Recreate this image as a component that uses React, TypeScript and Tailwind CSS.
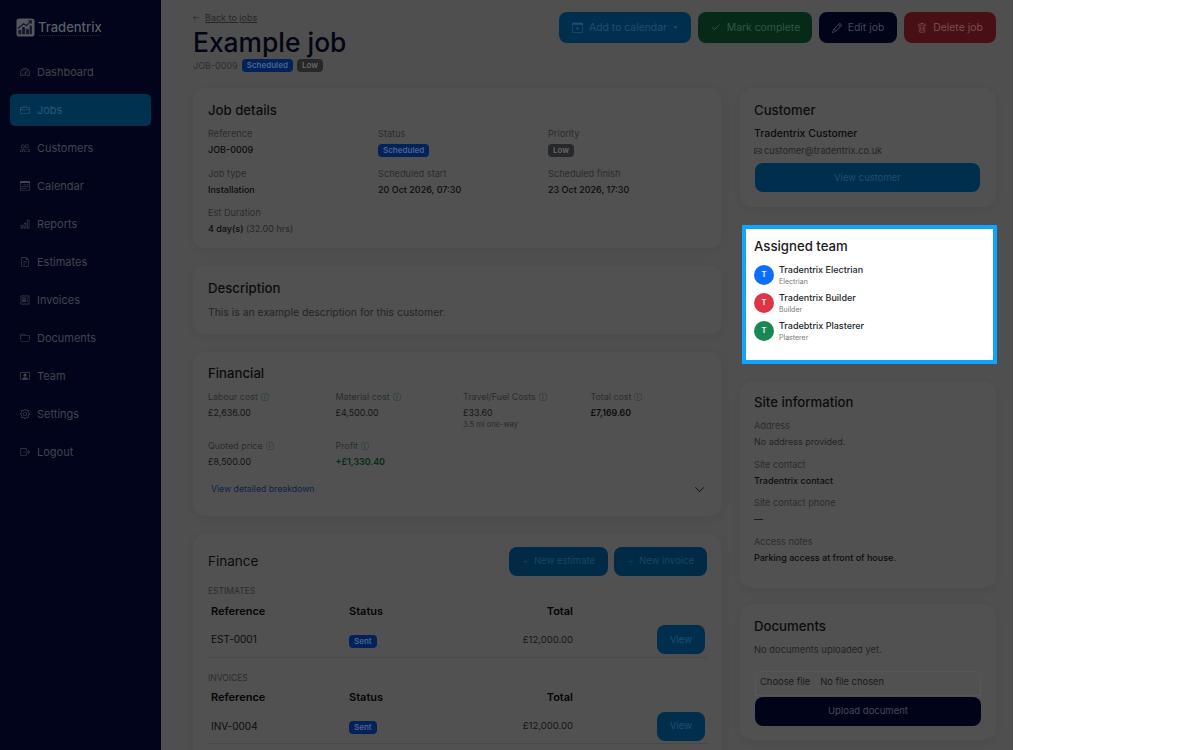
import React from "react";
import {
  BsSpeedometer2, BsBriefcase, BsPeople, BsCalendar3, BsBarChart, BsFileEarmarkText, BsReceipt, BsFolder,
  BsPersonVideo, BsGear, BsBoxArrowRight, BsCalendarPlus, BsCheck2, BsPencil, BsTrash, BsPlusLg, BsEnvelope,
  BsInfoCircle, BsChevronDown, BsArrowLeft, BsCaretDownFill,
} from "react-icons/bs";

const navItems = [
  { label: "Dashboard", icon: BsSpeedometer2 },
  { label: "Jobs", icon: BsBriefcase, active: true },
  { label: "Customers", icon: BsPeople },
  { label: "Calendar", icon: BsCalendar3 },
  { label: "Reports", icon: BsBarChart },
  { label: "Estimates", icon: BsFileEarmarkText },
  { label: "Invoices", icon: BsReceipt },
  { label: "Documents", icon: BsFolder },
  { label: "Team", icon: BsPersonVideo },
  { label: "Settings", icon: BsGear },
  { label: "Logout", icon: BsBoxArrowRight },
];

const team = [
  { name: "Tradentrix Electrian", role: "Electrian", color: "bg-[#0d6efd]" },
  { name: "Tradentrix Builder", role: "Builder", color: "bg-[#dc3545]" },
  { name: "Tradebtrix Plasterer", role: "Plasterer", color: "bg-[#198754]" },
];

const Card = ({ className = "", children }: { className?: string; children: React.ReactNode }) => (
  <section className={`rounded-xl bg-[#515151] shadow-[0_2px_10px_rgba(0,0,0,0.05)] ${className}`}>{children}</section>
);

const Title = ({ children }: { children: React.ReactNode }) => (
  <h3 className="text-[13.2px] leading-[22px] font-medium text-[#0c0c0e]">{children}</h3>
);

const Field = ({ label, value, className = "" }: { label: string; value: React.ReactNode; className?: string }) => (
  <div className={className}>
    <div className="text-[9.2px] leading-[14px] text-[#2c2c2e]">{label}</div>
    <div className="mt-[1px] text-[9px] leading-[16px] font-medium text-[#0c0c0e]">{value}</div>
  </div>
);

const Badge = ({ children, gray }: { children: React.ReactNode; gray?: boolean }) => (
  <span className={`inline-block rounded-[4px] px-[5px] text-[8px] leading-[13px] font-semibold ${gray ? "bg-[#26282a] text-[#6a6a6a]" : "bg-[#03225a] text-[#4a6494]"}`}>
    {children}
  </span>
);

const Money = ({ label, value, sub, bold, green }: { label: string; value: string; sub?: string; bold?: boolean; green?: boolean }) => {
  const tone = green ? "font-semibold text-[#042c18]" : bold ? "font-semibold text-[#0c0c0e]" : "text-[#141416]";
  return (
    <div className="h-[49px]">
      <div className="flex items-center gap-[3px] text-[8.9px] leading-[14px] text-[#2c2c2e]">
        {label} <BsInfoCircle className="size-[8px] text-[#263c40]" />
      </div>
      <div className={`mt-[1px] text-[8.9px] leading-[16px] ${tone}`}>{value}</div>
      {sub && <div className="text-[7.5px] leading-[8px] text-[#2a2a2c]">{sub}</div>}
    </div>
  );
};

const DocTable = ({ reference }: { reference: string }) => (
  <table className="mt-[2px] w-[500px] table-fixed text-[11px] text-[#050505]">
    <thead>
      <tr className="h-[24px]">
        <th className="w-[138px] px-[3px] text-left font-semibold">Reference</th>
        <th className="w-[90px] px-[3px] text-left font-semibold">Status</th>
        <th className="w-[140px] px-[3px] text-right font-semibold">Total</th>
        <th />
      </tr>
    </thead>
    <tbody>
      <tr className="h-[34px] border-b border-[#494949]">
        <td className="px-[3px] text-[10px] text-[#0c0c0e]">{reference}</td>
        <td className="px-[3px]"><Badge>Sent</Badge></td>
        <td className="px-[3px] text-right text-[9.5px] text-[#161618]">£12,000.00</td>
        <td className="px-[3px] text-right">
          <button className="inline-block h-[29px] w-[48px] rounded-lg bg-[#002f4d] text-[9.5px] text-[#1d5070]">View</button>
        </td>
      </tr>
    </tbody>
  </table>
);

const TopButton = ({ color, icon, children }: { color: string; icon: React.ReactNode; children: React.ReactNode }) => (
  <button className={`flex h-[31px] items-center justify-center gap-[6px] rounded-lg text-[10.4px] ${color}`}>
    {icon}
    {children}
  </button>
);

const Logo = () => (
  <div className="flex items-center gap-[3px] pl-[16px]">
    <svg viewBox="0 0 20 20" className="size-[19px]">
      <rect x="0.5" y="0.5" width="19" height="19" rx="3" fill="#55575c" />
      <path d="M3 17 L3 13 L5 13 L5 17 M7 17 L7 10 L9 10 L9 17 M11 17 L11 12 L13 12 L13 17" fill="#14172a" stroke="#14172a" strokeWidth="1" />
      <path d="M2 11 L8 6 L11 8 L16 3 M13 3 L16 3 L16 6" fill="none" stroke="#14172a" strokeWidth="1.3" />
      <path d="M15.5 8 L15.5 17" stroke="#14172a" strokeWidth="2.4" />
    </svg>
    <div>
      <div className="text-[13px] leading-[15px] font-medium text-[#5c5e65]">Tradentrix</div>
      <div className="ml-[1px] h-[1px] w-[62px] border-t border-dotted border-[#22242c]" />
    </div>
  </div>
);

export default function App() {
  return (
    <div className="h-[750px] w-[1200px] overflow-hidden bg-white font-['Inter',sans-serif]">
      <div className="flex h-full w-[1013px] bg-[#4f4f50]">
        <aside className="w-[161px] shrink-0 bg-[#01041a] pt-[18px]">
          <Logo />
          <nav className="mt-[19px] flex flex-col gap-[6px] px-[10px]">
            {navItems.map((item) => (
              <a
                key={item.label}
                className={`flex h-[32px] items-center gap-[7px] rounded-[5px] pl-[10px] text-[11px] ${item.active ? "bg-[#00324f] text-[#245a78]" : "text-[#42444e]"}`}
              >
                <item.icon className="size-[10px]" />
                {item.label}
              </a>
            ))}
          </nav>
        </aside>

        <main className="flex-1 pl-[32px] pr-[17px]">
          <header className="flex h-[88px] justify-between pt-[12px]">
            <div>
              <div className="flex items-center gap-[5px] text-[9px] leading-[11px] text-[#262628]">
                <BsArrowLeft className="size-[7px]" />
                <span className="underline">Back to jobs</span>
              </div>
              <h1 className="mt-[3px] text-[26.4px] leading-[32px] font-medium text-[#030512]">Example job</h1>
              <div className="mt-[1px] flex items-center gap-[4px] text-[9px] text-[#2e2e30]">
                JOB-0009 <Badge>Scheduled</Badge> <Badge gray>Low</Badge>
              </div>
            </div>
            <div className="grid grid-cols-[132px_114px_78px_92px] gap-[7px] self-start">
              <TopButton color="bg-[#002f4d] text-[#1d5070]" icon={<BsCalendarPlus className="size-[11px]" />}>
                Add to calendar <BsCaretDownFill className="size-[5px]" />
              </TopButton>
              <TopButton color="bg-[#072a18] text-[#2e5844]" icon={<BsCheck2 className="size-[11px]" />}>Mark complete</TopButton>
              <TopButton color="bg-[#010418] text-[#454958]" icon={<BsPencil className="size-[10px]" />}>Edit job</TopButton>
              <TopButton color="bg-[#481015] text-[#7a4e52]" icon={<BsTrash className="size-[10px]" />}>Delete job</TopButton>
            </div>
          </header>

          <div className="grid grid-cols-[529px_256px] gap-[18px]">
            <div className="flex flex-col gap-[18px]">
              <Card className="h-[160px] px-[15px] pt-[11px]">
                <Title>Job details</Title>
                <div className="mt-[6px] grid grid-cols-[170px_170px_1fr] gap-y-[8.5px]">
                  <Field label="Reference" value="JOB-0009" />
                  <Field label="Status" value={<Badge>Scheduled</Badge>} />
                  <Field label="Priority" value={<Badge gray>Low</Badge>} />
                  <Field label="Job type" value="Installation" />
                  <Field label="Scheduled start" value="20 Oct 2026, 07:30" />
                  <Field label="Scheduled finish" value="23 Oct 2026, 17:30" />
                  <Field label="Est Duration" value={<>4 day(s) <span className="font-normal text-[#262628]">(32.00 hrs)</span></>} />
                </div>
              </Card>

              <Card className="h-[68px] px-[15px] pt-[11px]">
                <Title>Description</Title>
                <p className="mt-[6px] text-[10.4px] leading-[16px] text-[#242426]">This is an example description for this customer.</p>
              </Card>

              <Card className="h-[164px] px-[15px] pt-[10px]">
                <Title>Financial</Title>
                <div className="mt-[6px] grid grid-cols-[127.5px_127.5px_127.5px_1fr]">
                  <Money label="Labour cost" value="£2,636.00" />
                  <Money label="Material cost" value="£4,500.00" />
                  <Money label="Travel/Fuel Costs" value="£33.60" sub="3.5 mi one-way" />
                  <Money label="Total cost" value="£7,169.60" bold />
                  <Money label="Quoted price" value="£8,500.00" />
                  <Money label="Profit" value="+£1,330.40" green />
                </div>
                <div className="-mt-[5px] flex items-center justify-between pl-[3px] pr-[2px]">
                  <a className="text-[8.7px] text-[#0e224e]">View detailed breakdown</a>
                  <BsChevronDown className="size-[11px] text-[#101010]" />
                </div>
              </Card>

              <Card className="h-[240px] px-[15px] pt-[13px]">
                <div className="flex items-center justify-between">
                  <h3 className="text-[13.5px] font-normal text-[#0c0c0e]">Finance</h3>
                  <div className="flex gap-[6px]">
                    <button className="flex h-[29px] w-[99px] items-center justify-center gap-[5px] rounded-lg bg-[#002a45] text-[9.5px] text-[#1a4862]"><BsPlusLg className="size-[7px]" />New estimate</button>
                    <button className="flex h-[29px] w-[93px] items-center justify-center gap-[5px] rounded-lg bg-[#002a45] text-[9.5px] text-[#1a4862]"><BsPlusLg className="size-[7px]" />New invoice</button>
                  </div>
                </div>
                <div className="mt-[9px] text-[8.5px] leading-[12px] text-[#2c2c2e]">ESTIMATES</div>
                <DocTable reference="EST-0001" />
                <div className="mt-[14px] text-[8.5px] leading-[12px] text-[#2c2c2e]">INVOICES</div>
                <DocTable reference="INV-0004" />
              </Card>
            </div>

            <div className="flex flex-col">
              <Card className="h-[119px] px-[14px] pt-[11px]">
                <Title>Customer</Title>
                <div className="mt-[5px] text-[10.5px] leading-[16px] font-medium text-[#0c0c0e]">Tradentrix Customer</div>
                <div className="mt-[2px] flex items-center gap-[2px] text-[9.2px] leading-[14px] text-[#242426]">
                  <BsEnvelope className="size-[8px]" /> customer@tradentrix.co.uk
                </div>
                <button className="mt-[5px] ml-[1px] h-[29px] w-[225px] rounded-lg bg-[#002f4d] pt-[1px] text-[9.5px] text-[#1d5070]">View customer</button>
              </Card>

              <section className="mt-[18px] mr-[-1px] ml-[2px] h-[139px] border-[4px] border-[#0ea5ff] bg-white pl-[8px] pt-[6px]">
                <h3 className="text-[13.2px] leading-[22px] font-medium text-[#1a1a1c]">Assigned team</h3>
                <div className="mt-[6px] flex flex-col gap-[4px]">
                  {team.map((member) => (
                    <div key={member.name} className="flex items-center gap-[5px]">
                      <span className={`flex size-[20px] items-center justify-center rounded-full text-[7.5px] font-semibold text-white ${member.color}`}>T</span>
                      <div>
                        <div className="text-[9px] leading-[13px] font-medium text-[#212529]">{member.name}</div>
                        <div className="text-[7px] leading-[11px] text-[#777]">{member.role}</div>
                      </div>
                    </div>
                  ))}
                </div>
              </section>

              <Card className="mt-[18px] h-[206px] px-[14px] pt-[9px]">
                <Title>Site information</Title>
                <div className="mt-[6px] flex flex-col gap-[7.5px]">
                  <div>
                    <div className="text-[9.2px] leading-[14px] text-[#2c2c2e]">Address</div>
                    <div className="mt-[1px] text-[9px] leading-[16px] text-[#242426]">No address provided.</div>
                  </div>
                  <Field label="Site contact" value="Tradentrix contact" />
                  <Field label="Site contact phone" value="—" />
                  <Field label="Access notes" value="Parking access at front of house." />
                </div>
              </Card>

              <Card className="mt-[16px] h-[136px] px-[14px] pt-[11px]">
                <Title>Documents</Title>
                <p className="mt-[5px] text-[9.4px] leading-[16px] text-[#242426]">No documents uploaded yet.</p>
                <div className="mt-[13px] ml-[1px] flex h-[25px] w-[226px] items-center rounded-t-md border border-[#585858] pb-[3px] text-[9.4px] text-[#1a1a1c]">
                  <span className="px-[4px]">Choose file</span>
                  <span className="pl-[6px]">No file chosen</span>
                </div>
                <button className="ml-[1px] h-[29px] w-[226px] rounded-lg bg-[#010418] text-[9.5px] text-[#454958]">Upload document</button>
              </Card>
            </div>
          </div>
        </main>
      </div>
    </div>
  );
}
